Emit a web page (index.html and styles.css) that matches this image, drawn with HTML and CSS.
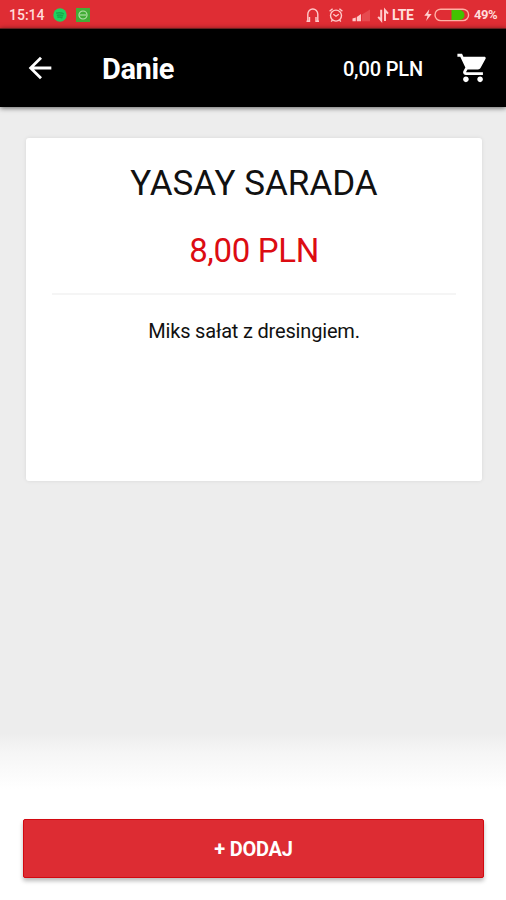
FILE: index.html
```html
<!DOCTYPE html>
<html lang="pl">
<head>
<meta charset="utf-8">
<title>Danie</title>
<link rel="stylesheet" href="styles.css">
</head>
<body>
<div class="statusbar">
  <span class="clock">15:14</span>
  <svg class="dot" width="14" height="14" viewBox="0 0 14 14"><circle cx="7" cy="7" r="6.7" fill="#20d260"/><path d="M3.2 5.2q4-1.2 7.6.8M3.8 7.4q3.4-.9 6.4.8M4.4 9.3q2.8-.6 5 .7" fill="none" stroke="#17a94c" stroke-width="1.5"/></svg>
  <svg class="app" width="14" height="14" viewBox="0 0 14 14"><path d="M0 0h14v14H0z" fill="#43ad36"/><circle cx="7" cy="7" r="4" fill="none" stroke="#b4e0a8" stroke-width="1.2"/><path d="M4 7h6" stroke="#c4e8b9"/></svg>
  <svg class="system" width="88" height="20" viewBox="0 0 88 20" fill="none" stroke="#ffc9c9" stroke-width="1.4">
    <path d="M4.5 16.3h3V12M17 16.3h-3V12M5.8 16V9.2a5 5.2 0 0 1 10 0V16"/>
    <circle cx="34" cy="10.6" r="5.5"/><path d="m31.3 9.2 2.7 2 2.8-2M27.6 6.2l3-2.5M40.4 6.2l-3-2.5M30.5 15l-1.3 1.6M37.5 15l1.3 1.6"/>
    <path d="M60 9.6 68 4.5v11.7h-8z" fill="#e64b50" stroke="none"/>
    <path d="M50.5 16.2v-2.7l3.3-1v3.7zM54.8 16.2v-4.3l4.2-3v7.3z" fill="#ffc9c9" stroke="none"/>
    <path d="M79.2 4.8v10.6l-3-3.5M83 16V5.2l3 3.5" stroke-width="2"/>
  </svg>
  <span class="network">LTE</span>
  <svg class="battery" width="48" height="20" viewBox="0 0 48 20"><path d="m7.3 4.2-5 6.5h3.3l-1.5 5.2 5.5-7H6.3z" fill="#ffd2d0"/><path d="M29.5 5h8a5 5 0 0 1 0 10h-8z" fill="#43c300"/><rect x="13" y="4.2" width="33.6" height="11.4" rx="5.7" fill="none" stroke="#ffb0a5" stroke-width="1.4"/></svg>
  <span class="percent">49%</span>
</div>
<header class="toolbar">
  <svg class="back" width="34" height="34" viewBox="0 0 24 24"><path fill="#fff" d="M20 11H7.83l5.59-5.59L12 4l-8 8 8 8 1.41-1.41L7.83 13H20z"/></svg>
  <h1>Danie</h1>
  <span class="total">0,00 PLN</span>
  <svg class="cart" width="34" height="34" viewBox="0 0 24 24"><path fill="#fff" d="M7 18c-1.1 0-1.99.9-1.99 2S5.9 22 7 22s2-.9 2-2-.9-2-2-2zM1 2v2h2l3.6 7.59-1.35 2.45c-.16.28-.25.61-.25.96 0 1.1.9 2 2 2h12v-2H7.42c-.14 0-.25-.11-.25-.25l.03-.12.9-1.63h7.45c.75 0 1.41-.41 1.75-1.03l3.58-6.49c.08-.14.12-.31.12-.48 0-.55-.45-1-1-1H5.21l-.94-2H1zm16 16c-1.1 0-1.99.9-1.99 2s.89 2 1.99 2 2-.9 2-2-.9-2-2-2z"/></svg>
</header>
<main>
  <article class="card">
    <h2>YASAY SARADA</h2>
    <p class="price">8,00 PLN</p>
    <p class="description">Miks sałat z dresingiem.</p>
  </article>
</main>
<footer><button>+ DODAJ</button></footer>
</body>
</html>
```
FILE: styles.css
```css
* { box-sizing: border-box; }
body { margin: 0; width: 506px; height: 900px; display: flex; flex-direction: column; overflow: hidden; background: #ededed; font-family: Roboto, sans-serif; }
h1, h2, p { margin: 0; font-weight: 400; }
svg { display: block; flex: none; }
.statusbar { height: 28px; flex: none; display: flex; align-items: center; padding: 1px 8px 0 9px; background: #df2d34; color: #ffdcda; font-size: 14px; font-weight: 500; white-space: nowrap; }
.clock { width: 44px; }
.app { margin-left: 9px; }
.system { margin-left: auto; }
.network { width: 25px; margin-left: 2px; font-weight: 700; letter-spacing: -.3px; }
.battery { margin-left: 5px; }
.percent { width: 24px; margin-left: 4px; font-size: 13px; font-weight: 700; letter-spacing: -.5px; }
.toolbar { height: 79px; flex: none; display: flex; align-items: center; padding: 0 16px 0 23px; border-top: 1px solid #65201f; background: #000; color: #fff; box-shadow: 0 1px 5px #0009; position: relative; }
h1 { margin-left: 45px; font-size: 29px; font-weight: 700; line-height: 34px; letter-spacing: -.4px; padding-top: 2px; }
.total { margin-left: auto; margin-right: 33px; padding-top: 2px; font-size: 20px; font-weight: 500; letter-spacing: -.15px; }
main { flex: 1; padding: 31px 24px 0 26px; }
.card { height: 343px; padding: 22px 26px 0; background: #fff; border-radius: 3px; box-shadow: 0 0 4px #00000016; text-align: center; color: #111; }
h2 { height: 48px; line-height: 48px; font-size: 35px; }
.price { height: 87px; padding-top: 20px; border-bottom: 2px solid #f5f5f5; color: #dc0c12; font-size: 33px; line-height: 46px; letter-spacing: -.35px; }
.description { padding-top: 23px; font-size: 20px; line-height: 26px; letter-spacing: -.18px; }
footer { height: 173px; flex: none; padding: 92px 22px 0 23px; background: linear-gradient(#ededed 0, #ededed 6px, #f5f5f5 24px, #fff 62px); }
button { display: block; width: 100%; height: 59px; padding: 0; border: 1px solid #d20910; border-radius: 2px; background: #dd2c33; color: #fff; box-shadow: 0 3px 4px #00000045; font: 700 20px/58px Roboto, sans-serif; letter-spacing: -.2px; }
```
